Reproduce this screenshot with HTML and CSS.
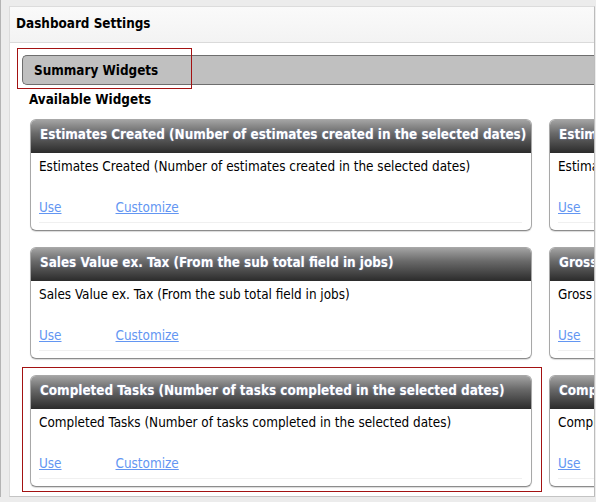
FILE: index.html
```html
<!DOCTYPE html>
<html>
<head>
<meta charset="utf-8">
<link rel="stylesheet" href="styles.css">
</head>
<body>
<div class="frame">
  <div class="panel">
    <div class="panel-head">Dashboard Settings</div>
    <div class="panel-body">
      <div class="bar-wrap">
        <div class="bar">Summary Widgets</div>
        <div class="mark mark-bar"></div>
      </div>
      <div class="avail">Available Widgets</div>
      <div class="rows">
        <div class="row">
          <div class="card">
            <div class="card-head">Estimates Created (Number of estimates created in the selected dates)</div>
            <div class="card-body">
              <div class="desc">Estimates Created (Number of estimates created in the selected dates)</div>
              <div class="links"><a href="#" class="use">Use</a><a href="#">Customize</a></div>
            </div>
          </div>
          <div class="card">
            <div class="card-head">Estimates Converted</div>
            <div class="card-body">
              <div class="desc">Estimates Converted</div>
              <div class="links"><a href="#" class="use">Use</a><a href="#">Customize</a></div>
            </div>
          </div>
        </div>
        <div class="row">
          <div class="card">
            <div class="card-head">Sales Value ex. Tax (From the sub total field in jobs)</div>
            <div class="card-body">
              <div class="desc">Sales Value ex. Tax (From the sub total field in jobs)</div>
              <div class="links"><a href="#" class="use">Use</a><a href="#">Customize</a></div>
            </div>
          </div>
          <div class="card">
            <div class="card-head">Gross Profit</div>
            <div class="card-body">
              <div class="desc">Gross Profit</div>
              <div class="links"><a href="#" class="use">Use</a><a href="#">Customize</a></div>
            </div>
          </div>
        </div>
        <div class="row">
          <div class="card">
            <div class="mark mark-card"></div>
            <div class="card-head">Completed Tasks (Number of tasks completed in the selected dates)</div>
            <div class="card-body">
              <div class="desc">Completed Tasks (Number of tasks completed in the selected dates)</div>
              <div class="links"><a href="#" class="use">Use</a><a href="#">Customize</a></div>
            </div>
          </div>
          <div class="card">
            <div class="card-head">Completed Jobs</div>
            <div class="card-body">
              <div class="desc">Completed Jobs</div>
              <div class="links"><a href="#" class="use">Use</a><a href="#">Customize</a></div>
            </div>
          </div>
        </div>
      </div>
    </div>
  </div>
</div>
</body>
</html>
```

FILE: styles.css
```css
html, body {
  margin: 0;
  padding: 0;
}
body {
  width: 596px;
  height: 502px;
  overflow: hidden;
  background: #ececec;
  font-family: "DejaVu Sans Condensed", "DejaVu Sans", sans-serif;
  font-size: 13.4px;
  color: #000;
}
.frame {
  border-left: 1px solid #b4b4b4;
  padding: 6px 1px 0 8px;
}
.panel {
  border: 1px solid #dcdcdc;
  border-right: 1px solid #bcbcbc;
  border-bottom: 1px solid #c4c4c4;
  background: #fff;
  overflow: hidden;
}
.panel-head {
  height: 36px;
  box-sizing: border-box;
  padding: 9px 0 0 6px;
  background: linear-gradient(#fafafa, #f3f3f3);
  border-bottom: 1px solid #dadada;
  font-weight: bold;
  line-height: 16px;
}
.panel-body {
  padding: 12px 0 9px 12px;
}
.bar-wrap {
  position: relative;
}
.bar {
  height: 28px;
  border: 1px solid #6e6e6e;
  border-right: none;
  border-radius: 5px 0 0 5px;
  background: #c0c0c0;
  font-weight: bold;
  line-height: 29px;
  padding-left: 11px;
  margin-right: -2px;
}
.mark {
  position: absolute;
  border: 1px solid #a31212;
  pointer-events: none;
  z-index: 2;
}
.mark-bar {
  left: -5px;
  top: -7px;
  width: 173px;
  height: 39px;
}
.avail {
  font-weight: bold;
  line-height: 16px;
  margin: 7px 0 0 7px;
}
.rows {
  display: flex;
  flex-direction: column;
  gap: 16px;
  margin: 11px 0 0 8px;
}
.row {
  display: flex;
  gap: 17px;
}
.card {
  flex: none;
  width: 502px;
  box-sizing: border-box;
  border: 1px solid #a8a8a8;
  border-bottom-color: #8c8c8c;
  border-radius: 6px;
  box-shadow: 0 1px 1px rgba(0,0,0,0.15);
  background: #fff;
  position: relative;
}
.mark-card {
  left: -9px;
  top: -9px;
  right: -11px;
  bottom: -6px;
}
.card-head {
  height: 33px;
  box-sizing: border-box;
  border-radius: 5px 5px 0 0;
  background: linear-gradient(#a3a3a3 0%, #6a6a6a 40%, #2b2b2b 100%);
  color: #fff;
  font-weight: bold;
  line-height: 16px;
  padding: 7px 0 0 9px;
  white-space: nowrap;
  overflow: hidden;
  text-shadow: 0 0 2px rgba(150,180,255,0.5);
}
.card-body {
  padding: 6px 9px 0 8px;
  height: 77px;
  box-sizing: border-box;
}
.desc {
  line-height: 16px;
  white-space: nowrap;
}
.links {
  margin-top: 25px;
  line-height: 16px;
  padding-bottom: 6px;
  border-bottom: 1px solid #f0f0f0;
  white-space: nowrap;
}
.links a {
  color: #6396f2;
  text-decoration: underline;
}
.links a.use {
  margin-right: 54px;
}
```
